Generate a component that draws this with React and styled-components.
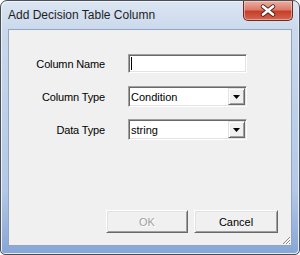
import styled, { createGlobalStyle } from 'styled-components'

const GlobalStyle = createGlobalStyle`
  html, body {
    margin: 0;
    padding: 0;
    background: #ffffff;
  }

  body {
    font-family: "Liberation Sans", Arial, sans-serif;
  }
`

const Window = styled.div`
  box-sizing: border-box;
  width: 300px;
  height: 255px;
  display: flex;
  flex-direction: column;
  padding: 0 7px 8px 7px;
  border: 1px solid #4a4f57;
  border-radius: 7px 7px 5px 5px;
  background: linear-gradient(180deg, #dce6f2 0%, #c9d8ec 12%, #bfd1e9 40%, #b2c8e6 75%, #86a6d6 100%);
  box-shadow: inset 1px 1px 0 #eef3fa, inset -1px -1px 0 #e4ecf7;
  overflow: hidden;
`

const TitleBar = styled.div`
  height: 28px;
  display: flex;
  align-items: flex-start;
  justify-content: space-between;
  flex-shrink: 0;
`

const Title = styled.span`
  margin-top: 7px;
  font-size: 12px;
  color: #1e1e1e;
`

const CloseButton = styled.div`
  width: 48px;
  height: 19px;
  margin-right: -1px;
  display: flex;
  align-items: center;
  justify-content: center;
  border: 1px solid #6b2a22;
  border-top: none;
  border-radius: 0 0 5px 5px;
  background: linear-gradient(180deg, #ebb0a4 0%, #dc7b69 45%, #c53f2a 55%, #d56650 100%);
  box-shadow: inset 0 0 0 1px rgba(255, 220, 210, 0.5);
`

const Client = styled.div`
  flex: 1;
  display: flex;
  flex-direction: column;
  background: #f0f0f0;
  border: 1px solid #93a6c1;
  position: relative;
`

const Form = styled.div`
  display: grid;
  grid-template-columns: 96px 119px;
  grid-auto-rows: 21px;
  column-gap: 23px;
  row-gap: 12px;
  margin-top: 23px;
  align-items: center;
`

const Label = styled.label`
  text-align: right;
  font-size: 11px;
  letter-spacing: -0.15px;
  color: #000;
`

const Sunken = styled.div`
  box-sizing: border-box;
  height: ${p => p.$h}px;
  display: flex;
  align-items: center;
  background: #fff;
  border: 1px solid;
  border-color: #a0a0a0 #ffffff #ffffff #a0a0a0;
  box-shadow: inset 1px 1px 0 #696969, inset -1px -1px 0 #e3e3e3;
`

const Caret = styled.span`
  width: 1px;
  height: 13px;
  margin-left: 2px;
  background: #000;
`

const ComboText = styled.span`
  flex: 1;
  padding-left: 2px;
  font-size: 11px;
  color: #000;
`

const DropButton = styled.div`
  box-sizing: border-box;
  width: 17px;
  height: 17px;
  margin-right: 1px;
  display: flex;
  align-items: center;
  justify-content: center;
  background: #f0f0f0;
  border: 1px solid;
  border-color: #e3e3e3 #696969 #696969 #e3e3e3;
  box-shadow: inset 1px 1px 0 #ffffff, inset -1px -1px 0 #a0a0a0;
`

const ButtonRow = styled.div`
  margin-top: auto;
  display: flex;
  justify-content: flex-end;
  gap: 6px;
  padding: 0 13px 12px 0;
`

const Button = styled.div`
  box-sizing: border-box;
  width: ${p => p.$w}px;
  height: 23px;
  display: flex;
  align-items: center;
  justify-content: center;
  font-size: 11px;
  color: ${p => (p.$disabled ? '#a0a0a0' : '#000')};
  text-shadow: ${p => (p.$disabled ? '1px 1px 0 #ffffff' : 'none')};
  background: #f0f0f0;
  border: 1px solid;
  border-color: #ffffff #696969 #696969 #ffffff;
  box-shadow: inset 1px 1px 0 #e3e3e3, inset -1px -1px 0 #a0a0a0;
`

const Grip = styled.svg`
  position: absolute;
  right: 0;
  bottom: 0;
`

function Arrow() {
  return (
    <svg width="7" height="4" viewBox="0 0 7 4">
      <path d="M0 0h7L3.5 4z" fill="#000" />
    </svg>
  )
}

function Combo({ value }) {
  return (
    <Sunken $h={21}>
      <ComboText>{value}</ComboText>
      <DropButton><Arrow /></DropButton>
    </Sunken>
  )
}

export default function App() {
  return (
    <>
      <GlobalStyle />
      <Window>
        <TitleBar>
          <Title>Add Decision Table Column</Title>
          <CloseButton>
            <svg width="16" height="13" viewBox="0 0 16 13">
              <path d="M3 2.5l10 8M13 2.5l-10 8" stroke="#4e1c16" strokeWidth="4.4" strokeLinecap="round" />
              <path d="M3 2.5l10 8M13 2.5l-10 8" stroke="#ffffff" strokeWidth="2.8" strokeLinecap="round" />
            </svg>
          </CloseButton>
        </TitleBar>
        <Client>
          <Form>
            <Label>Column Name</Label>
            <Sunken $h={19}><Caret /></Sunken>
            <Label>Column Type</Label>
            <Combo value="Condition" />
            <Label>Data Type</Label>
            <Combo value="string" />
          </Form>
          <ButtonRow>
            <Button $w={82} $disabled>OK</Button>
            <Button $w={84}>Cancel</Button>
          </ButtonRow>
          <Grip width="10" height="10" viewBox="0 0 10 10">
            <path d="M9 2L2 9M9 5L5 9M9 8L8 9" stroke="#8a8a8a" strokeWidth="1" />
            <path d="M10 3L3 10M10 6L6 10" stroke="#ffffff" strokeWidth="1" />
          </Grip>
        </Client>
      </Window>
    </>
  )
}
